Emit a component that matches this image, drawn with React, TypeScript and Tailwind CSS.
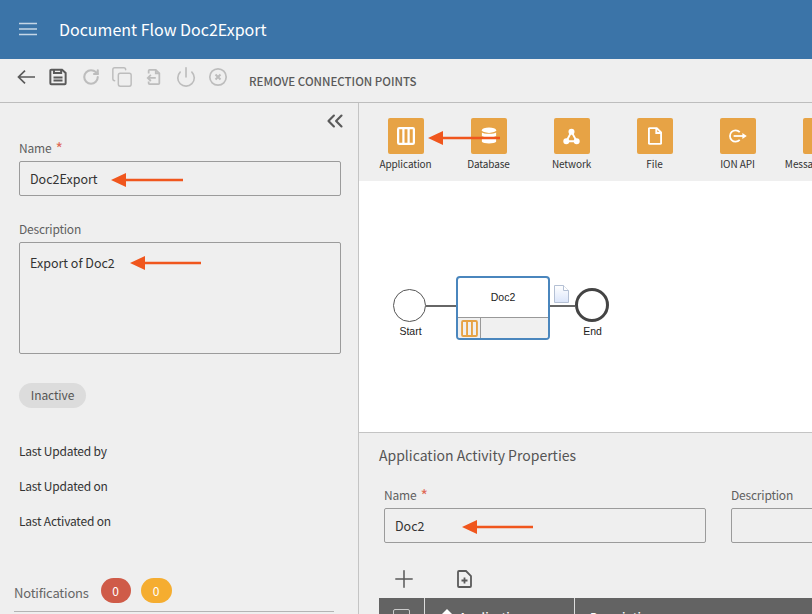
import { ChevronsLeft, Copy, Plus, Power, RotateCw } from "lucide-react"

const font = "font-['Noto_Sans_CJK_JP','Noto_Sans',sans-serif]"

function Arrow({ className, width }: { className: string; width: number }) {
  return (
    <svg className={`absolute ${className}`} width={width} height="16" viewBox={`0 0 ${width} 16`}>
      <path d={`M14 8H${width}`} stroke="#f0561d" strokeWidth="2.5" />
      <path d="M0 8L15 1V15Z" fill="#f0561d" />
    </svg>
  )
}

function Field({ label, required, value, className }: { label: string; required?: boolean; value: string; className: string }) {
  return (
    <div className={className}>
      <div className="h-[19px] text-[12px] leading-[18px] tracking-[-0.2px] text-[#5f5f5f]">
        {label}
        {required && <span className="ml-[4px] align-[-2px] text-[16px] leading-none text-[#df6b57]">*</span>}
      </div>
      <div className="mt-[3px] h-[35px] rounded-[2px] border border-[#9b9b9b] pl-[10px] text-[12.5px] leading-[34px] text-[#333333]">
        {value}
      </div>
    </div>
  )
}

function ToolIcon({ children, label }: { children?: React.ReactNode; label: string }) {
  return (
    <div className="flex w-[83px] shrink-0 flex-col items-center">
      <div className="flex h-9 w-9 items-center justify-center rounded-[2px] bg-[#e7a345]">{children}</div>
      <div className="mt-[2px] whitespace-nowrap text-[10px] leading-[15px] tracking-[-0.1px] text-[#333333]">{label}</div>
    </div>
  )
}

function AppGlyph({ size, color, bar }: { size: number; color: string; bar: number }) {
  return (
    <svg width={size} height={size} viewBox="0 0 16 16" fill="none" stroke={color} strokeWidth={bar}>
      <rect x="1" y="1" width="14" height="14" rx="1" />
      <path d="M5.7 1V15M10.3 1V15" />
    </svg>
  )
}

export default function App() {
  return (
    <div className={`relative flex h-[614px] w-[812px] flex-col overflow-hidden bg-[#efefef] ${font}`}>
      {/* header */}
      <header className="flex h-[59px] shrink-0 items-center bg-[#3b74a8] pb-[2px] pl-[19px] text-white">
        <svg width="18" height="14" viewBox="0 0 18 14" stroke="#c5d6e6" strokeWidth="1.6">
          <path d="M0 1.5H18M0 7H18M0 12.5H18" />
        </svg>
        <h1 className="ml-[22px] text-[16px] leading-6 font-normal">Document Flow Doc2Export</h1>
      </header>

      {/* toolbar */}
      <div className="flex h-[44px] shrink-0 items-start border-b border-[#bdbdbd] pl-[17px] pt-[8px]">
        <div className="flex h-[20px] items-center">
          <svg width="18" height="14" viewBox="0 0 18 14" fill="none" stroke="#5a5a5a" strokeWidth="1.7">
            <path d="M18 7H1.5M8 0.7 1.5 7 8 13.3" />
          </svg>
          <svg className="ml-[14px]" width="18" height="18" viewBox="0 0 20 20" fill="none" stroke="#5a5a5a" strokeWidth="2.2">
            <path d="M1.5 3a1 1 0 0 1 1-1h12l4 3.500V17a1 1 0 0 1-1 1h-15a1 1 0 0 1-1-1Z" />
            <path d="M5.5 2v3.500h8V2M5 10.500h10M5 14h10" />
          </svg>
          <RotateCw className="ml-[15px] h-[18px] w-[18px] text-[#bdbdbd]" strokeWidth={2.8} />
          <Copy className="ml-[11px] h-[22px] w-[22px] text-[#bdbdbd]" strokeWidth={1.6} />
          <svg className="ml-[13px]" width="16" height="18" viewBox="0 0 18 20" fill="none" stroke="#bdbdbd" strokeWidth="2">
            <path d="M3 6V3a1 1 0 0 1 1-1h7l4 4v11a1 1 0 0 1-1 1H4a1 1 0 0 1-1-1v-2" />
            <path d="M11 2v4h4M11 11H2M5.5 7.500 2 11l3.500 3.500" />
          </svg>
          <Power className="ml-[13px] h-[22px] w-[22px] text-[#bdbdbd]" strokeWidth={1.8} />
          <svg className="ml-[11px]" width="20" height="20" viewBox="0 0 20 20" fill="none" stroke="#bdbdbd">
            <circle cx="10" cy="10" r="8.200" strokeWidth="1.700" />
            <path d="M7.500 7.500l5 5M12.500 7.500l-5 5" strokeWidth="2" />
          </svg>
        </div>
        <span className="ml-[21px] mt-[6px] text-[11.5px] leading-4 font-medium text-[#595959]">REMOVE CONNECTION POINTS</span>
      </div>

      <div className="flex min-h-0 flex-1">
        {/* left panel */}
        <aside className="relative w-[359px] shrink-0 border-r border-[#c4c4c4]">
          <div className="flex h-[34px] justify-end pr-[10px] pt-[5px]">
            <ChevronsLeft className="h-[26px] w-[26px] text-[#5a5a5a]" strokeWidth={2} />
          </div>
          <Field label="Name" required value="Doc2Export" className="ml-[19px] mr-[17px] mt-[2px]" />
          <div className="ml-[19px] mt-[24px] h-[19px] text-[12px] leading-[18px] tracking-[-0.2px] text-[#5f5f5f]">Description</div>
          <div className="ml-[19px] mr-[17px] mt-[3px] h-[112px] rounded-[2px] border border-[#9b9b9b] pl-[10px] pt-[10px] text-[12.5px] leading-[19px] text-[#333333]">
            Export of Doc2
          </div>
          <div className="ml-[19px] mt-[29px] flex h-[25px] w-[67px] items-center justify-center rounded-full bg-[#dcdcdc] pb-[1px] text-[12px] tracking-[-0.1px] text-[#555555]">Inactive</div>
          <div className="ml-[19px] mt-[34px] flex flex-col gap-[17px] text-[12px] leading-[18px] tracking-[-0.2px] text-[#333333]">
            <div>Last Updated by</div>
            <div>Last Updated on</div>
            <div>Last Activated on</div>
          </div>
          <div className="ml-[14px] mr-[24px] mt-[48px] flex h-[34px] items-start border-b border-[#b4b4b4]">
            <span className="mt-[5px] text-[13px] leading-[19px] tracking-[-0.2px] text-[#666666]">Notifications</span>
            <span className="ml-[12px] flex h-[25px] w-[30px] items-center justify-center rounded-full bg-[#cf5b48] text-[12px] text-white">0</span>
            <span className="ml-[10px] flex h-[25px] w-[31px] items-center justify-center rounded-full bg-[#f5ad30] text-[12px] text-white">0</span>
          </div>
          <Arrow className="left-[111px] top-[69px]" width={72} />
          <Arrow className="left-[130px] top-[152px]" width={71} />
        </aside>

        {/* right side */}
        <main className="relative min-w-0 flex-1">
          <div className="flex h-[78px] items-start pl-[5px] pt-[15px]">
            <ToolIcon label="Application"><AppGlyph size={18} color="#fff" bar={2} /></ToolIcon>
            <ToolIcon label="Database">
              <svg width="16" height="18" viewBox="0 0 18 20" fill="#fff">
                <ellipse cx="9" cy="3.500" rx="8" ry="3" />
                <path d="M1 6c1.500 2 14.500 2 16 0v4c-1.500 2-14.500 2-16 0ZM1 12c1.500 2 14.500 2 16 0v4.500c-1.500 2.500-14.500 2.500-16 0Z" />
              </svg>
            </ToolIcon>
            <ToolIcon label="Network">
              <svg width="17" height="17" viewBox="0 0 18 18" fill="none" stroke="#fff" strokeWidth="2">
                <path d="M9 4 3.500 14h11Z" />
                <circle cx="9" cy="4" r="2.200" fill="#fff" />
                <circle cx="3.500" cy="14" r="2.200" fill="#fff" />
                <circle cx="14.500" cy="14" r="2.200" fill="#fff" />
              </svg>
            </ToolIcon>
            <ToolIcon label="File">
              <svg width="14" height="18" viewBox="0 0 16 20" fill="none" stroke="#fff" strokeWidth="2.200">
                <path d="M2 1h8l5 5v12a1 1 0 0 1-1 1H2a1 1 0 0 1-1-1V2a1 1 0 0 1 1-1Z" />
                <path d="M9.500 1v5.500H15" />
              </svg>
            </ToolIcon>
            <ToolIcon label="ION API">
              <svg width="22" height="14" viewBox="0 0 22 16" fill="none" stroke="#fff" strokeWidth="2">
                <path d="M13 3.500A6.500 6.500 0 1 0 13 12.500" />
                <path d="M6 8h12" />
                <path d="M16 4.500 21 8l-5 3.500Z" fill="#fff" stroke="none" />
              </svg>
            </ToolIcon>
            <ToolIcon label="Message Queue" />
          </div>

          {/* canvas */}
          <div className="relative h-[252px] border-b border-[#c4c4c4] bg-white font-['Liberation_Sans',sans-serif] text-[10.5px] text-[#222222]">
            <div className="absolute left-[67px] top-[124px] h-[2px] w-[31px] bg-[#666666]" />
            <div className="absolute left-[190px] top-[124px] h-[2px] w-[26px] bg-[#666666]" />
            <div className="absolute left-[34px] top-[108px] h-[33px] w-[33px] rounded-full border border-[#555555] bg-white" />
            <div className="absolute left-[31px] top-[144px] w-[41px] text-center leading-[13px]">Start</div>
            <div className="absolute left-[97px] top-[95px] flex h-[64px] w-[94px] flex-col overflow-hidden rounded-[4px] border-2 border-[#4a86bd] bg-white">
              <div className="flex h-[39px] items-center justify-center pb-[1px] leading-[13px]">Doc2</div>
              <div className="flex flex-1 border-t border-[#999999] bg-[#f0f0f0]">
                <div className="flex w-[23px] items-center justify-center border-r border-[#999999]">
                  <AppGlyph size={17} color="#e7a345" bar={1.8} />
                </div>
              </div>
            </div>
            <svg className="absolute left-[194px] top-[103px]" width="17" height="20" viewBox="0 0 17 20">
              <defs>
                <linearGradient id="docFill" x1="0" y1="0" x2="0" y2="1">
                  <stop offset="0" stopColor="#ffffff" />
                  <stop offset="1" stopColor="#dbe5fa" />
                </linearGradient>
              </defs>
              <path d="M1.5 1.500h9l5 5v12h-14Z" fill="url(#docFill)" stroke="#b4c0d4" />
              <path d="M10.500 1.500v5h5" fill="#fff" stroke="#b4c0d4" />
            </svg>
            <div className="absolute left-[216px] top-[107px] h-[34px] w-[34px] rounded-full border-[3px] border-[#444444] bg-white" />
            <div className="absolute left-[213px] top-[144px] w-[41px] text-center leading-[13px]">End</div>
          </div>

          {/* properties */}
          <div className="pl-[20px]">
            <h2 className="mt-[11px] h-[22px] text-[14px] leading-[22px] font-normal text-[#555555]">Application Activity Properties</h2>
            <div className="mt-[20px] flex gap-[25px] pl-[5px]">
              <Field label="Name" required value="Doc2" className="w-[322px] shrink-0" />
              <Field label="Description" value="" className="w-[200px] shrink-0" />
            </div>
            <div className="ml-[11px] mt-[24px] flex h-[24px] items-center">
              <Plus className="h-[28px] w-[28px] text-[#5a5a5a]" strokeWidth={1.3} />
              <svg className="ml-[39px]" width="15" height="18" viewBox="0 0 15 18" fill="none" stroke="#5a5a5a" strokeWidth="1.8">
                <path d="M2 1h7l5 5v10a1 1 0 0 1-1 1H2a1 1 0 0 1-1-1V2a1 1 0 0 1 1-1Z" />
                <path d="M4.500 10.500h6M7.500 7.500v6" />
              </svg>
            </div>
            <div className="mt-[7px] flex h-[30px] bg-[#636363] text-[12px] font-medium text-white">
              <div className="flex w-[46px] justify-center border-r border-[#dddddd] pt-[11px]">
                <div className="h-[17px] w-[17px] rounded-[2px] border border-[#cccccc]" />
              </div>
              <div className="flex w-[150px] items-start border-r border-[#dddddd] pl-[16px] pt-[10px]">
                <span className="mr-[6px] mt-[1px] h-0 w-0 border-x-[6px] border-b-[6px] border-x-transparent border-b-white" />
                <span>Application</span>
              </div>
              <div className="pl-[15px] pt-[10px]">Description</div>
            </div>
          </div>

          <Arrow className="left-[69px] top-[27px]" width={72} />
          <Arrow className="left-[103px] top-[416px]" width={71} />
        </main>
      </div>
    </div>
  )
}
